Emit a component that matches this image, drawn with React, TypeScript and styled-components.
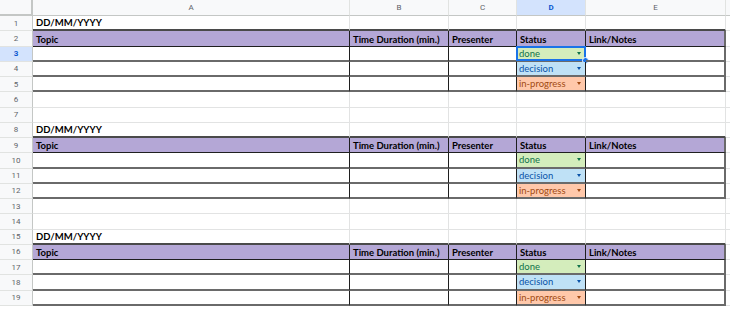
import React from 'react'
import styled, { createGlobalStyle, css } from 'styled-components'

type Status = 'done' | 'decision' | 'in-progress'
type Kind = 'blank' | 'date' | 'head' | 'body'

const LETTERS = ['A', 'B', 'C', 'D', 'E']
const HEADINGS = ['Topic', 'Time Duration (min.)', 'Presenter', 'Status', 'Link/Notes']
const STATUSES: Status[] = ['done', 'decision', 'in-progress']

const block: Kind[] = ['date', 'head', 'body', 'body', 'body', 'blank', 'blank']
const ROWS: Kind[] = [...block, ...block, ...block].slice(0, 19)

const TONES: Record<Status, { bg: string; fg: string }> = {
    done: { bg: '#d4edbc', fg: '#11734b' },
    decision: { bg: '#bfe1f6', fg: '#0a53a8' },
    'in-progress': { bg: '#ffc8aa', fg: '#a14a12' },
}

export default function App(): JSX.Element {
    let bodyIndex = 0
    return (
        <>
            <GlobalStyle />
            <Sheet>
                <Corner />
                {LETTERS.map((l) => (
                    <ColHead key={l} $active={l === 'D'}>
                        {l}
                    </ColHead>
                ))}
                <Gutter $head />
                {ROWS.map((kind, r) => {
                    const rowNo = r + 1
                    const status = kind === 'body' ? STATUSES[bodyIndex++ % 3] : null
                    return (
                        <React.Fragment key={rowNo}>
                            <RowNum $active={rowNo === 3}>{rowNo}</RowNum>
                            {LETTERS.map((l, c) => (
                                <Cell key={l} $kind={kind} $last={c === 4}>
                                    {kind === 'date' && c === 0 && 'DD/MM/YYYY'}
                                    {kind === 'head' && HEADINGS[c]}
                                    {status && c === 3 && (
                                        <Chip $tone={status}>
                                            <span>{status}</span>
                                            <Caret />
                                        </Chip>
                                    )}
                                    {rowNo === 3 && c === 3 && (
                                        <Selection>
                                            <Handle />
                                        </Selection>
                                    )}
                                </Cell>
                            ))}
                            <Gutter />
                        </React.Fragment>
                    )
                })}
            </Sheet>
        </>
    )
}

const GlobalStyle = createGlobalStyle`
    html, body {
        margin: 0;
        padding: 0;
        background: #fff;
    }
    * {
        box-sizing: border-box;
    }
`

const Sheet = styled.div`
    width: 730px;
    height: 309px;
    overflow: hidden;
    display: grid;
    grid-template-columns: 33px 317px 99px 68px 69px 140px 4px;
    grid-template-rows: 16px;
    grid-auto-rows: 15.25px;
    background: #fff;
`

const Corner = styled.div`
    background: #f8f9fa;
    border-right: 2px solid #c4c7c5;
    border-bottom: 2px solid #c4c7c5;
`

const ColHead = styled.div<{ $active?: boolean }>`
    display: flex;
    align-items: center;
    justify-content: center;
    background: ${(p) => (p.$active ? '#d3e3fd' : '#f8f9fa')};
    color: ${(p) => (p.$active ? '#0b57d0' : '#5f6368')};
    font-family: Roboto, 'Liberation Sans', sans-serif;
    font-size: 8px;
    font-weight: ${(p) => (p.$active ? 700 : 400)};
    border-right: 1px solid #e1e3e1;
    border-bottom: 1px solid #c4c7c5;
`

const Gutter = styled.div<{ $head?: boolean }>`
    background: ${(p) => (p.$head ? '#f8f9fa' : '#fff')};
    border-bottom: 1px solid ${(p) => (p.$head ? '#c4c7c5' : '#e2e3e3')};
`

const RowNum = styled.div<{ $active?: boolean }>`
    display: flex;
    align-items: center;
    justify-content: center;
    background: ${(p) => (p.$active ? '#d3e3fd' : '#f8f9fa')};
    color: ${(p) => (p.$active ? '#0b57d0' : '#5f6368')};
    font-family: Roboto, 'Liberation Sans', sans-serif;
    font-size: 8px;
    font-weight: ${(p) => (p.$active ? 700 : 400)};
    border-right: 1px solid #c4c7c5;
    border-bottom: 1px solid #e1e3e1;
`

const Cell = styled.div<{ $kind: Kind; $last?: boolean }>`
    position: relative;
    display: flex;
    align-items: flex-end;
    padding: 0 3px 1px;
    font-family: Lato, 'Liberation Sans', sans-serif;
    font-size: 9.5px;
    color: #000;
    white-space: nowrap;
    border-right: 1px solid #e2e3e3;
    border-bottom: 1px solid #e2e3e3;
    ${(p) =>
        p.$kind === 'date' &&
        css`
            font-weight: 700;
            border-bottom: 2px solid #4a4a4a;
        `}
    ${(p) =>
        p.$kind === 'head' &&
        css`
            font-weight: 700;
            background: #b4a7d6;
            border-right: 1px solid #1f1f1f;
            border-bottom: 1px solid #1f1f1f;
        `}
    ${(p) =>
        p.$kind === 'body' &&
        css`
            padding: 0;
            border-right: 1px solid #1f1f1f;
            border-bottom: 2px solid #6a6a6a;
        `}
    ${(p) =>
        p.$last &&
        (p.$kind === 'head' || p.$kind === 'body') &&
        css`
            border-right: 2px solid #6a6a6a;
        `}
`

const Chip = styled.div<{ $tone: Status }>`
    flex: 1;
    align-self: stretch;
    display: flex;
    align-items: center;
    justify-content: space-between;
    padding: 0 4px 0 2px;
    background: ${(p) => TONES[p.$tone].bg};
    color: ${(p) => TONES[p.$tone].fg};
    font-size: 9.5px;
`

const Caret = styled.i`
    width: 0;
    height: 0;
    border-left: 2.5px solid transparent;
    border-right: 2.5px solid transparent;
    border-top: 3px solid currentColor;
`

const Selection = styled.div`
    position: absolute;
    inset: -1px;
    border: 2px solid #1a73e8;
    pointer-events: none;
`

const Handle = styled.span`
    position: absolute;
    right: -5px;
    bottom: -5px;
    width: 7px;
    height: 7px;
    border-radius: 50%;
    background: #1a73e8;
    border: 1px solid #fff;
`
